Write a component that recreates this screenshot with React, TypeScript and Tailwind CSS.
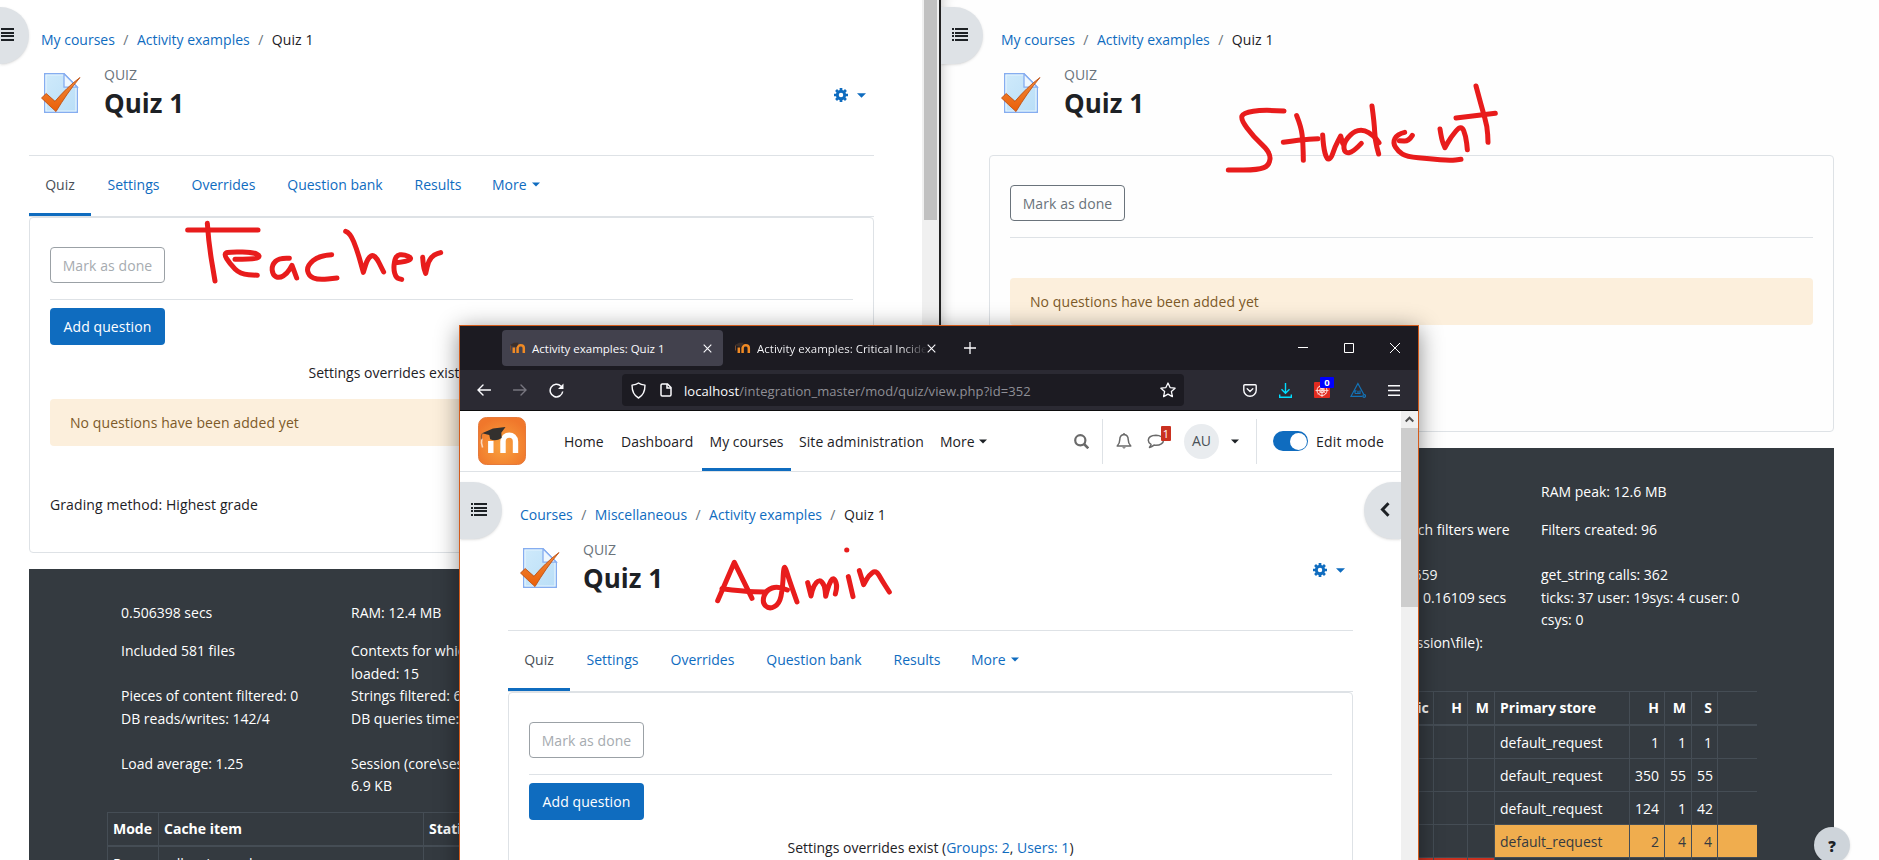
import type { ReactNode } from "react";

type Point = [number, number];

// Quadratic smoothing through midpoints; a doubled point makes a corner.
function smooth(points: Point[]) {
  const [first, ...rest] = points;
  let d = `M${first[0]} ${first[1]}`;
  rest.forEach((p, i) => {
    const next = rest[i + 1];
    if (!next) {
      d += `L${p[0]} ${p[1]}`;
      return;
    }
    d += `Q${p[0]} ${p[1]} ${(p[0] + next[0]) / 2} ${(p[1] + next[1]) / 2}`;
  });
  return d;
}

const teacherStrokes: Point[][] = [
  [[563, 690], [774, 690]],
  [[622, 670], [626, 730], [645, 843]],
  [[705, 778], [765, 778], [782, 768], [760, 757], [695, 755], [670, 760], [690, 792], [720, 822], [772, 826]],
  [[868, 775], [838, 773], [815, 795], [818, 825], [838, 835], [862, 820], [876, 796], [876, 796], [890, 834]],
  [[995, 764], [958, 766], [920, 798], [926, 828], [955, 840], [1011, 834]],
  [[1037, 694], [1050, 698], [1072, 752], [1090, 817], [1090, 817], [1103, 774], [1124, 762], [1151, 816]],
  [[1187, 788], [1222, 784], [1236, 774], [1212, 763], [1187, 766], [1180, 805], [1188, 834], [1205, 838]],
  [[1268, 772], [1270, 800], [1277, 820], [1277, 820], [1286, 782], [1302, 764], [1322, 758]],
];

const studentStrokes: Point[][] = [
  [[1062, 333], [1000, 329], [940, 338], [932, 358], [970, 410], [1022, 458], [1018, 496], [985, 510], [895, 510]],
  [[1100, 347], [1114, 382], [1119, 430], [1120, 481]],
  [[1060, 427], [1110, 419], [1164, 416]],
  [[1178, 405], [1180, 440], [1190, 478], [1203, 476], [1215, 440], [1232, 408], [1232, 408], [1238, 430]],
  [[1294, 430], [1270, 456], [1244, 460], [1240, 430], [1268, 396], [1300, 388], [1332, 408], [1347, 428]],
  [[1326, 318], [1333, 370], [1335, 420], [1346, 462]],
  [[1447, 406], [1436, 424], [1408, 422]],
  [[1424, 397], [1402, 402], [1388, 428], [1405, 455], [1430, 470], [1500, 477], [1560, 482], [1593, 478]],
  [[1530, 387], [1535, 420], [1545, 443], [1545, 443], [1562, 412], [1594, 374], [1608, 410], [1612, 449]],
  [[1638, 258], [1656, 325], [1672, 380], [1674, 427]],
  [[1578, 354], [1696, 340]],
];

const adminStrokes: Point[][] = [
  [[2153, 1802], [2203, 1687], [2203, 1687], [2256, 1795]],
  [[2166, 1766], [2230, 1774], [2295, 1776]],
  [[2362, 1770], [2335, 1758], [2298, 1770], [2286, 1808], [2308, 1828], [2338, 1812], [2348, 1765], [2350, 1715], [2354, 1696], [2366, 1735], [2391, 1806]],
  [[2423, 1748], [2433, 1788], [2433, 1788], [2440, 1758], [2458, 1738], [2474, 1755], [2477, 1789], [2477, 1789], [2486, 1755], [2500, 1730], [2512, 1755], [2506, 1782]],
  [[2545, 1730], [2559, 1790]],
  [[2540, 1650], [2540.5, 1650]],
  [[2578, 1712], [2591, 1754], [2591, 1754], [2606, 1726], [2628, 1710], [2645, 1740], [2668, 1776]],
];

function Handwriting({ strokes, shift = 0 }: { strokes: Point[][]; shift?: number }) {
  return (
    <svg
      className="pointer-events-none absolute inset-0 z-30"
      width="1879"
      height="860"
      viewBox="0 0 5637 2580"
      fill="none"
      stroke="#e81c1c"
      strokeWidth="15"
      strokeLinecap="round"
      strokeLinejoin="round"
    >
      <g transform={`translate(${shift} 0)`}>
        {strokes.map((points, i) => (
          <path key={i} d={smooth(points)} />
        ))}
      </g>
    </svg>
  );
}

/* ---------- icons ---------- */

function Caret({ className = "" }: { className?: string }) {
  return (
    <svg className={className} width="9" height="5" viewBox="0 0 9 5" fill="currentColor">
      <path d="M0 .3h9L4.5 4.7z" />
    </svg>
  );
}

function GearIcon() {
  return (
    <svg className="shrink-0" width="14" height="14" viewBox="0 0 14 14" fill="none" stroke="currentColor">
      <circle cx="7" cy="7" r="3.700" strokeWidth="2.900" />
      <path
        d="M7 0v2.400M7 11.600V14M0 7h2.400M11.600 7H14M2.050 2.050l1.700 1.700M10.250 10.250l1.700 1.700M2.050 11.950l1.700-1.700M10.250 3.750l1.700-1.700"
        strokeWidth="2.700"
      />
    </svg>
  );
}

function ListIcon() {
  return (
    <svg width="16" height="13" viewBox="0 0 16 13" fill="#1d2125" shapeRendering="crispEdges">
      {[0, 4, 7, 11].map((y) => (
        <g key={y}>
          <rect x="0" y={y} width="2" height="2" />
          <rect x="3" y={y} width="13" height="2" />
        </g>
      ))}
    </svg>
  );
}

function QuizIcon() {
  return (
    <svg width="40" height="41" viewBox="0 0 40 41">
      <defs>
        <linearGradient id="paper" x1="0" y1="0" x2="1" y2="1">
          <stop offset="0" stopColor="#cfeafb" />
          <stop offset="1" stopColor="#b9def7" />
        </linearGradient>
        <linearGradient id="tick" x1="0" y1="0" x2="0" y2="1">
          <stop offset="0" stopColor="#f08a3c" />
          <stop offset="1" stopColor="#ea5f08" />
        </linearGradient>
      </defs>
      <path d="M3.700.700H23L36.300 14.200V39.300H3.700z" fill="url(#paper)" stroke="#86adf0" strokeWidth="1.400" />
      <path d="M5 2h17.500L35 15v23H5z" fill="none" stroke="#e4f4fd" strokeWidth="1.200" />
      <path d="M23 .700V14.200H36.300z" fill="#eef7fe" stroke="#86adf0" strokeWidth="1.300" />
      <path
        d="M.500 25L5.200 20.500 14 28.300C21 20 30 11 39 4.500 30 15 22 27 15 38.600 10 34 5 29.500.500 25z"
        fill="url(#tick)"
        stroke="#b9470a"
        strokeWidth=".8"
      />
    </svg>
  );
}

function MoodleLogo() {
  return (
    <svg width="48" height="48" viewBox="0 0 48 48">
      <defs>
        <radialGradient id="logo" cx=".5" cy=".6" r=".6">
          <stop offset="0" stopColor="#f9a33f" />
          <stop offset="1" stopColor="#f0772b" />
        </radialGradient>
      </defs>
      <rect x=".5" y=".5" width="47" height="47" rx="8" fill="url(#logo)" stroke="#e57a3c" />
      <path d="M12.800 36V24M25 36V24.500c0-8.500 12.500-8.500 12.500 0V36" fill="none" stroke="#fff" strokeWidth="5.400" />
      <path d="M3.800 21.500q-1 4 .8 9" fill="none" stroke="#fbd9bd" strokeWidth="1.600" />
      <path d="M4 16.300L15 11.600 27.500 10l-4.200 5.800.4 5.200q-6 4-11.500 1.200l-.9-4.200z" fill="#33302e" />
      <path d="M4.200 16.400q-1.400 2-.8 6" fill="none" stroke="#5a4a40" strokeWidth=".8" />
    </svg>
  );
}

function Favicon() {
  return (
    <svg width="17" height="12" viewBox="0 0 17 12" fill="none">
      <path d="M4.800 11V5.500M8.600 11V6c0-3.600 6.200-3.600 6.200 0v5" stroke="#f08a24" strokeWidth="2.500" />
      <path d="M1 3l4-2.300L9.500.800 8.500 3.500 7.500 5 4 4.500z" fill="#3b2f2b" />
      <path d="M1.500 3.500v5" stroke="#7a4a2c" />
    </svg>
  );
}

/* ---------- shared quiz page ---------- */

function QuizHeader({ crumbs, withGear }: { crumbs: string[]; withGear?: boolean }) {
  return (
    <>
      <div className="flex h-[22px] items-center pl-[12px]">
        {crumbs.map((crumb) => (
          <span key={crumb} className="flex">
            <span className="text-[#0f6cbf]">{crumb}</span>
            <span className="w-[22px] text-center text-[#6a737b]">/</span>
          </span>
        ))}
        <span className="tracking-[0.100px] text-[#1d2125]">Quiz 1</span>
      </div>
      <div className="flex h-[104px] pt-[22px] pl-[12px]">
        <QuizIcon />
        <div className="-mt-[9px] ml-[23px] flex-1">
          <div className="h-[22px] text-[#6a737b]">QUIZ</div>
          <h1 className="mt-px text-[26px] leading-[32px] font-bold text-[#1d2125]">Quiz 1</h1>
        </div>
        {withGear && (
          <div className="mt-[15px] flex h-[14px] w-[40px] shrink-0 items-center gap-[9px] pr-[8px] text-[#0f6cbf]">
            <GearIcon />
            <Caret />
          </div>
        )}
      </div>
    </>
  );
}

const tabs = [
  { label: "Quiz", width: "w-[62px]" },
  { label: "Settings", width: "w-[85px]" },
  { label: "Overrides", width: "w-[95px]" },
  { label: "Question bank", width: "w-[128px]" },
  { label: "Results", width: "w-[78px]" },
];

function QuizTabs() {
  return (
    <div className="flex h-[62px] border-t border-b border-[#dee2e6] text-[#0f6cbf]">
      {tabs.map((tab, i) => (
        <div
          key={tab.label}
          className={`flex ${tab.width} items-center justify-center whitespace-nowrap ${
            i === 0 ? "border-b-[3px] border-[#0f6cbf] pt-px text-[#495057]" : "pb-[2px]"
          }`}
        >
          {tab.label}
        </div>
      ))}
      <div className="flex items-center gap-[5px] pb-[2px] pl-[15px]">
        More
        <Caret className="-mt-[2px] w-[8px]" />
      </div>
    </div>
  );
}

function MarkAsDone({ enabled }: { enabled?: boolean }) {
  return (
    <div
      className={`flex h-[36px] w-[115px] items-center justify-center rounded-[4px] border pt-px tracking-[0.080px] ${
        enabled ? "border-[#6a737b] text-[#6a737b]" : "border-[#9ba1a6] text-[#a6abb0]"
      }`}
    >
      Mark as done
    </div>
  );
}

function EmptyAlert() {
  return (
    <div className="flex h-[47px] items-center rounded-[4px] bg-[#fcefdc] pl-[20px] tracking-[0.080px] text-[#7d5a29]">
      No questions have been added yet
    </div>
  );
}

function TeacherQuiz({ crumbs }: { crumbs: string[] }) {
  return (
    <div className="w-[845px]">
      <QuizHeader crumbs={crumbs} withGear />
      <QuizTabs />
      <div className="h-[336px] rounded-[4px] border border-[#dee2e6] px-[20px] pt-[29px]">
        <MarkAsDone />
        <div className="mt-[16px] border-t border-[#dee2e6]" />
        <div className="mt-[8px] flex h-[37px] w-[115px] items-center justify-center rounded-[4px] bg-[#0f6cbf] pt-px tracking-[0.080px] text-white">
          Add question
        </div>
        <div className="mt-[17px] mb-[15px] text-center">
          Settings overrides exist (<span className="text-[#0f6cbf]">Groups: 2</span>,{" "}
          <span className="text-[#0f6cbf]">Users: 1</span>)
        </div>
        <EmptyAlert />
        <div className="mt-[48px] tracking-[0.100px]">Grading method: Highest grade</div>
      </div>
    </div>
  );
}

/* ---------- performance footer ---------- */

function PerfRow({ cells, className = "" }: { cells: ReactNode[]; className?: string }) {
  return (
    <div className={`grid grid-cols-[230px_230px_215px] ${className}`}>
      {cells.map((cell, i) => (
        <div key={i} className="leading-[22.500px] whitespace-nowrap">
          {cell}
        </div>
      ))}
    </div>
  );
}

const columns = [
  "w-[51px]",
  "w-[265px]",
  "w-[50px] text-right",
  "w-[34px] text-right",
  "w-[27px] text-right",
  "w-[135px]",
  "w-[35px] text-right",
  "w-[27px] text-right",
  "w-[26px] text-right",
  "w-[120px]",
];

const cacheHead = ["Mode", "Cache item", "Static", "H", "M", "Primary store", "H", "M", "S", ""];

const cacheRows = [
  { cells: ["Req", "adhoc/core_d", "", "", "", "default_request", "1", "1", "1", ""] },
  { cells: ["", "", "", "", "", "default_request", "350", "55", "55", ""] },
  { cells: ["", "", "", "", "", "default_request", "124", "1", "42", ""] },
  { cells: ["", "", "", "", "", "default_request", "2", "4", "4", ""], tone: "warning" },
  { cells: ["", "", "", "", "", "", "", "", "", ""], tone: "danger" },
];

function cellTone(tone: string | undefined, i: number) {
  if (tone === "warning" && i >= 5) return "bg-[#f0ad4e] text-[#343a40]";
  if (tone === "danger" && i < 5) return "bg-[#ca3120]";
  return "";
}

function PerfPanel({ className, load, ram }: { className: string; load: string; ram: string }) {
  return (
    <div className={`w-[845px] overflow-hidden bg-[#343a40] pt-[32px] text-white ${className}`}>
      <div className="pt-px pl-[92px]">
        <PerfRow cells={[load, ram, "RAM peak: 12.6 MB"]} />
        <PerfRow
          className="mt-[15.500px]"
          cells={[
            "Included 581 files",
            <>
              Contexts for which filters were
              <br />
              loaded: 15
            </>,
            "Filters created: 96",
          ]}
        />
        <PerfRow cells={["Pieces of content filtered: 0", "Strings filtered: 659", "get_string calls: 362"]} />
        <PerfRow
          cells={[
            "DB reads/writes: 142/4",
            "DB queries time: 0.16109 secs",
            <>
              ticks: 37 user: 19sys: 4 cuser: 0
              <br />
              csys: 0
            </>,
          ]}
        />
        <PerfRow
          cells={[
            "Load average: 1.25",
            <>
              Session (core\session\file):
              <br />
              6.9 KB
            </>,
            "",
          ]}
        />
      </div>
      <div className="mt-[14px] ml-[78px] w-[690px] overflow-hidden border-t border-[#454d55]">
        <div className="flex w-[770px] border-b-2 border-[#454d55] font-bold">
          {cacheHead.map((label, i) => (
            <div key={i} className={`h-[32px] border-l border-[#454d55] px-[5px] leading-[32px] whitespace-nowrap ${columns[i]}`}>
              {label}
            </div>
          ))}
        </div>
        {cacheRows.map((row, r) => (
          <div key={r} className="flex w-[770px] border-b border-[#454d55]">
            {row.cells.map((cell, i) => (
              <div
                key={i}
                className={`h-[32px] border-l border-[#454d55] px-[5px] leading-[33px] whitespace-nowrap ${columns[i]} ${cellTone(row.tone, i)}`}
              >
                {cell}
              </div>
            ))}
          </div>
        ))}
      </div>
    </div>
  );
}

/* ---------- windows ---------- */

function TeacherWindow() {
  return (
    <section className="relative flex w-[941px] shrink-0 border-r-2 border-[#222] bg-white">
      <div className="h-[860px] flex-1 overflow-hidden pt-[29px] pl-[29px]">
        <TeacherQuiz crumbs={["My courses", "Activity examples"]} />
        <PerfPanel className="mt-[16px] h-[300px]" load="0.506398 secs" ram="RAM: 12.4 MB" />
      </div>
      <div className="w-[17px] bg-[#f0f0f0] px-[2px]">
        <div className="h-[220px] bg-[#c1c1c1]" />
      </div>
      <div className="absolute top-[7px] left-0 flex h-[57px] w-[29px] items-center overflow-hidden rounded-r-full bg-[#dee2e6] shadow-sm">
        <div className="-mt-[2px] -ml-[2px] shrink-0">
          <ListIcon />
        </div>
      </div>
    </section>
  );
}

function StudentWindow() {
  return (
    <section className="relative h-[860px] flex-1 overflow-hidden bg-[#fefefe] pt-[29px] pl-[48px] shadow-[inset_14px_0_14px_-14px_rgba(0,0,0,0.25)]">
      <div className="w-[845px]">
        <QuizHeader crumbs={["My courses", "Activity examples"]} />
        <div className="h-[277px] rounded-[4px] border border-[#dee2e6] px-[20px] pt-[29px]">
          <MarkAsDone enabled />
          <div className="mt-[16px] mb-[40px] border-t border-[#dee2e6]" />
          <EmptyAlert />
        </div>
      </div>
      <PerfPanel className="mt-[16px] h-[420px]" load="" ram="" />
      <div className="absolute top-[7px] left-0 flex h-[57px] w-[42px] items-center rounded-r-full bg-[#dee2e6] pl-[11px] shadow-sm">
        <div className="-mt-[2px]">
          <ListIcon />
        </div>
      </div>
      <div className="absolute top-[827px] left-[873px] flex h-[36px] w-[36px] items-center justify-center rounded-full bg-[#ced4da] pt-[2px] text-[15px] font-extrabold text-[#1d2125] shadow-sm">
        ?
      </div>
    </section>
  );
}

function TabStrip() {
  return (
    <div className="flex h-[44px] bg-[#1c1b22] pt-[4px] pl-[42px] text-[11.500px] text-[#fbfbfe]">
      <div className="flex h-[36px] w-[221px] items-center rounded-[4px] bg-[#42414d] pl-[7px]">
        <Favicon />
        <span className="mt-px ml-[6px] w-[171px] whitespace-nowrap">Activity examples: Quiz 1</span>
        <svg width="9" height="9" viewBox="0 0 9 9" stroke="#fbfbfe" strokeWidth="1.100">
          <path d="M.700.700l7.600 7.600M8.300.700L.700 8.300" />
        </svg>
      </div>
      <div className="flex h-[36px] items-center pl-[11px]">
        <Favicon />
        <span className="mt-px ml-[6px] w-[170px] overflow-hidden bg-linear-to-r from-[#fbfbfe] from-85% to-transparent bg-clip-text whitespace-nowrap text-transparent">
          Activity examples: Critical Incident
        </span>
        <svg width="9" height="9" viewBox="0 0 9 9" stroke="#fbfbfe" strokeWidth="1.100">
          <path d="M.700.700l7.600 7.600M8.300.700L.700 8.300" />
        </svg>
        <svg className="ml-[28px]" width="12" height="12" viewBox="0 0 12 12" stroke="#fbfbfe" strokeWidth="1.300">
          <path d="M6 0v12M0 6h12" />
        </svg>
      </div>
      <div className="mt-[13px] mr-[18px] ml-auto flex gap-[36px]">
        <svg width="10" height="10" viewBox="0 0 10 10" stroke="#fff">
          <path d="M0 4.500h10" />
        </svg>
        <svg width="10" height="10" viewBox="0 0 10 10" fill="none" stroke="#fff">
          <path d="M.500.500h9v9h-9z" />
        </svg>
        <svg width="10" height="10" viewBox="0 0 10 10" stroke="#fff">
          <path d="M0 0l10 10M10 0L0 10" />
        </svg>
      </div>
    </div>
  );
}

function Toolbar() {
  return (
    <div className="flex h-[41px] items-center border-b border-[#0c0c0d] bg-[#2b2a33] pl-[17px]">
      <svg width="14" height="12" viewBox="0 0 14 12" fill="none" stroke="#fbfbfe" strokeWidth="1.400" strokeLinecap="round">
        <path d="M13.500 6H1M6 1L1 6l5 5" />
      </svg>
      <svg className="ml-[22px]" width="14" height="12" viewBox="0 0 14 12" fill="none" stroke="#77767f" strokeWidth="1.400" strokeLinecap="round">
        <path d="M.500 6H13M8 1l5 5-5 5" />
      </svg>
      <svg className="ml-[22px]" width="15" height="15" viewBox="0 0 15 15" fill="none" stroke="#fbfbfe" strokeWidth="1.500">
        <path d="M13.700 8.500A6.300 6.300 0 1 1 12 3.200" />
        <path d="M14.500.500v5.500H9z" fill="#fbfbfe" stroke="none" />
      </svg>
      <div className="ml-[58px] flex h-[32px] w-[562px] items-center rounded-[4px] bg-[#1c1b22] pl-[9px]">
        <svg width="15" height="17" viewBox="0 0 15 17" fill="none" stroke="#fbfbfe" strokeWidth="1.400">
          <path d="M7.500 1C6 2.300 3.500 3 1 3.100 1 9 2.500 13.500 7.500 16 12.500 13.500 14 9 14 3.100 11.500 3 9 2.300 7.500 1z" strokeLinejoin="round" />
        </svg>
        <svg className="ml-[14px]" width="12" height="14" viewBox="0 0 12 14" fill="none" stroke="#fbfbfe" strokeWidth="1.500">
          <path d="M1 2.200Q1 1 2.200 1H7.500L11 4.500v7.300Q11 13 9.800 13H2.200Q1 13 1 11.800z" />
          <path d="M7 1v4h4" />
        </svg>
        <span className="mt-px ml-[12px] text-[13px] tracking-[0.080px] whitespace-nowrap text-[#8f8f96]">
          <span className="text-[#fbfbfe]">localhost</span>/integration_master/mod/quiz/view.php?id=352
        </span>
        <svg className="mr-[8px] ml-auto" width="16" height="16" viewBox="0 0 16 16" fill="none" stroke="#fbfbfe" strokeWidth="1.300" strokeLinejoin="round">
          <path d="M8 1l2.100 4.600 5 .6-3.700 3.400 1 5L8 12.100l-4.400 2.500 1-5L.900 6.200l5-.6z" />
        </svg>
      </div>
      <svg className="ml-[59px]" width="14" height="13" viewBox="0 0 14 13" fill="none" stroke="#fbfbfe" strokeWidth="1.400" strokeLinecap="round" strokeLinejoin="round">
        <path d="M1.800.800h10.400q1 0 1 1v4.400a6.200 6 0 0 1-12.400 0V1.800q0-1 1-1z" />
        <path d="M4.200 4.800L7 7.400l2.800-2.600" />
      </svg>
      <svg className="ml-[22px]" width="13" height="15" viewBox="0 0 13 15" fill="none" stroke="#00ddff" strokeWidth="1.400">
        <path d="M6.500 0v10M2.500 6.200l4 4 4-4M.700 11.500v2.800h11.600v-2.800" />
      </svg>
      <div className="relative ml-[22px] h-[16px] w-[16px]">
        <svg width="16" height="16" viewBox="0 0 16 16" fill="none" stroke="#ffe9e6">
          <rect width="16" height="16" rx="1" fill="#e22b20" stroke="none" />
          <circle cx="8" cy="8.500" r="5" />
          <circle cx="8" cy="8.500" r="2.300" />
          <path d="M4 12.500l8-8M5 4l7 8M8 2v13M1.500 8.500h13" strokeWidth=".8" />
        </svg>
        <span className="absolute -top-[5px] left-[6px] h-[11px] w-[14px] rounded-[1px] bg-[#0000ff] text-center text-[9.500px] leading-[11px] font-bold text-white">
          0
        </span>
      </div>
      <svg className="ml-[20px]" width="16" height="16" viewBox="0 0 16 16" fill="none" stroke="#1373b8" strokeWidth="1.200">
        <path d="M12.500 14.300H1L7.900 1.500l5.800 10.700M5 11.500V8.800h1.500M8 8.800v2.700M10 8.500v3M5 11.500h5.500" />
        <circle cx="14.200" cy="14" r="1.300" />
      </svg>
      <svg className="ml-[22px]" width="12" height="11" viewBox="0 0 12 11" stroke="#fbfbfe" strokeWidth="1.400">
        <path d="M0 .800h12M0 5.500h12M0 10.200h12" />
      </svg>
    </div>
  );
}

function SiteNav() {
  return (
    <div className="flex h-[61px] border-b border-[#dee2e6] pl-[18px]">
      <div className="mt-[6px] mr-[38px]">
        <MoodleLogo />
      </div>
      <nav className="flex whitespace-nowrap text-[#1d2125] [&>*]:flex [&>*]:items-center">
        <span className="w-[57px] pt-px">Home</span>
        <span className="w-[81px] pt-px">Dashboard</span>
        <span className="w-[89px] justify-center border-b-[3px] border-[#0f6cbf] pt-1">My courses</span>
        <span className="ml-[8px] w-[141px] pt-px tracking-[0.080px]">Site administration</span>
        <span className="pt-px">
          More
          <Caret className="ml-[4px] w-[8px]" />
        </span>
      </nav>
      <div className="ml-auto flex items-center">
        <svg width="15" height="15" viewBox="0 0 15 15" fill="none" stroke="#6a6a6a" strokeWidth="2.200">
          <circle cx="6.300" cy="6.300" r="5.100" />
          <path d="M10 10l4.300 4.300" strokeWidth="2.600" />
        </svg>
        <div className="ml-[13px] h-[45px] border-l border-[#dee2e6]" />
        <svg className="ml-[13px]" width="16" height="16" viewBox="0 0 16 16" fill="none" stroke="#6a6a6a" strokeWidth="1.500">
          <path d="M8 1.500C5 1.800 3.800 4 3.800 6.500 3.800 10 2.800 11.500 1.200 13h13.600C13.200 11.500 12.200 10 12.200 6.500 12.200 4 11 1.800 8 1.500zM8 0v1.500" strokeLinejoin="round" />
          <path d="M6 14.200h4L8 15.800z" fill="#6a6a6a" stroke="none" />
        </svg>
        <div className="relative ml-[15px] h-[14px] w-[18px]">
          <svg width="18" height="15" viewBox="0 0 18 15" fill="none" stroke="#6a6a6a" strokeWidth="1.500">
            <path d="M9 1.300c4.300 0 7.500 2.200 7.500 5s-3.200 5-7.500 5q-1 0-2-.2-2 1.800-4.500 2.300 1.300-1.300 1.500-3Q1.300 8.800 1.300 6.300 1.500 1.500 9 1.300z" strokeLinejoin="round" />
          </svg>
          <span className="absolute -top-[8px] left-[14px] h-[15px] w-[10px] rounded-[1px] bg-[#ca3120] text-center text-[11px] leading-[15px] text-white">
            1
          </span>
        </div>
        <div className="ml-[19px] flex h-[35px] w-[35px] items-center justify-center rounded-full bg-[#e9ecef] text-[14px] text-[#495057]">
          AU
        </div>
        <Caret className="ml-[12px] w-[8px]" />
        <div className="ml-[17px] h-[45px] border-l border-[#dee2e6]" />
        <div className="ml-[16px] flex h-[20px] w-[35px] items-center justify-end rounded-full bg-[#0f6cbf] pr-px">
          <div className="h-[17px] w-[17px] rounded-full bg-white" />
        </div>
        <span className="ml-[8px] w-[85px] pt-px tracking-[0.200px] whitespace-nowrap">Edit mode</span>
      </div>
    </div>
  );
}

function AdminWindow() {
  return (
    <section className="absolute top-[325px] left-[459px] z-20 h-[560px] w-[960px] border border-[#d35b1b] bg-white shadow-[0_4px_22px_rgba(0,0,0,0.45)]">
      <TabStrip />
      <Toolbar />
      <div className="flex">
        <div className="relative h-[474px] w-[941px] overflow-hidden">
          <SiteNav />
          <div className="pt-[32px] pl-[48px]">
            <TeacherQuiz crumbs={["Courses", "Miscellaneous", "Activity examples"]} />
          </div>
          <div className="absolute top-[71px] left-0 flex h-[57px] w-[42px] items-center rounded-r-full bg-[#dee2e6] pl-[11px] shadow-sm">
            <div className="-mt-[2px]">
              <ListIcon />
            </div>
          </div>
          <div className="absolute top-[71px] right-0 flex h-[57px] w-[37px] items-center rounded-l-full bg-[#dee2e6] pl-[16px] shadow-sm">
            <svg className="-mt-[2px]" width="10" height="15" viewBox="0 0 10 15" fill="none" stroke="#1d2125" strokeWidth="3">
              <path d="M8.500 1.300L2.500 7.500l6 6.200" />
            </svg>
          </div>
        </div>
        <div className="h-[474px] w-[17px] bg-[#f0f0f0]">
          <div className="flex h-[17px] items-center justify-center">
            <svg width="9" height="7" viewBox="0 0 9 7" fill="none" stroke="#505050" strokeWidth="2">
              <path d="M.700 5.500l3.800-3.800 3.800 3.800" />
            </svg>
          </div>
          <div className="h-[179px] bg-[#cdcdcd]" />
        </div>
      </div>
    </section>
  );
}

export default function App() {
  return (
    <main className="relative flex h-[860px] w-[1879px] overflow-hidden bg-white font-['Open_Sans','Noto_Sans',sans-serif] text-[14px] leading-[22px] text-[#1d2125]">
      <TeacherWindow />
      <StudentWindow />
      <AdminWindow />
      <Handwriting strokes={teacherStrokes} />
      <Handwriting strokes={studentStrokes} shift={2790} />
      <Handwriting strokes={adminStrokes} />
    </main>
  );
}
